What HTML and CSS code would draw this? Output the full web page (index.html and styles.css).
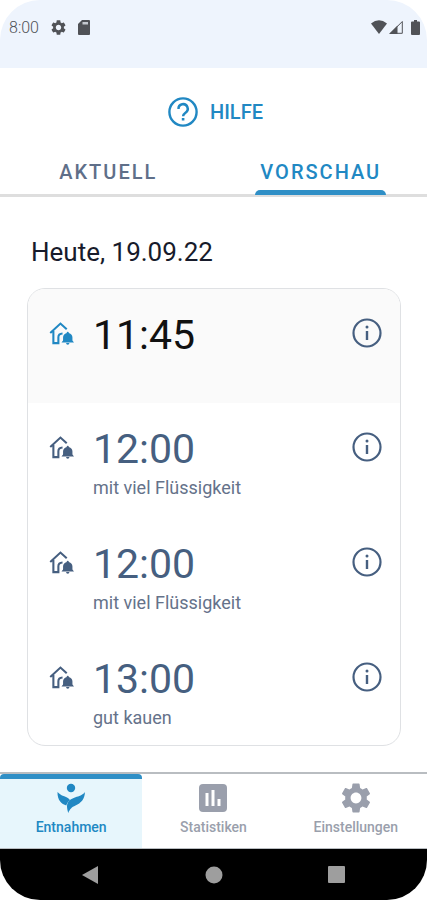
FILE: index.html
```html
<!DOCTYPE html>
<html lang="de">
<head>
<meta charset="utf-8">
<meta name="viewport" content="width=device-width, initial-scale=1">
<title>Entnahmen</title>
<link rel="stylesheet" href="styles.css">
</head>
<body>
<svg class="defs" aria-hidden="true">
  <symbol id="home-bell" viewBox="0 0 24 24">
    <path d="M1.200 11.500 11 2.500l6 5.500M4.200 9.500v11.700H9V15.500q0-3.300 4-3.500" fill="none" stroke="currentColor" stroke-width="2"/>
    <path d="M18 10.200a1 1 0 0 1 1 1v.3c2.300.6 3.500 2.400 3.500 4.300v3l1.500 1.900H12l1.500-1.900v-3c0-1.900 1.200-3.700 3.500-4.300v-.3a1 1 0 0 1 1-1ZM16.400 21.200h3.200a1.600 1.600 0 0 1-3.200 0Z" fill="currentColor"/>
  </symbol>
  <symbol id="info" viewBox="0 0 30 30">
    <circle cx="15" cy="15" r="13.500" fill="none" stroke="currentColor" stroke-width="2.200"/>
    <circle cx="15" cy="9" r="1.500" fill="currentColor"/>
    <path d="M15 13v9" stroke="currentColor" stroke-width="2.400"/>
  </symbol>
  <symbol id="gear" viewBox="2 2 20 20">
    <path fill="currentColor" d="M19.140 12.940c.04-.3.060-.61.060-.94 0-.32-.02-.64-.07-.94l2.030-1.580c.18-.14.23-.41.120-.61l-1.920-3.320c-.12-.22-.37-.29-.59-.22l-2.390.96c-.5-.38-1.030-.7-1.620-.94l-.36-2.540c-.04-.24-.24-.41-.48-.41h-3.840c-.24 0-.43.170-.47.410l-.36 2.540c-.59.240-1.130.570-1.620.940l-2.390-.96c-.22-.08-.47 0-.59.220L2.740 8.870c-.12.210-.08.470.120.610l2.030 1.580c-.05.300-.09.630-.09.940s.02.640.070.940l-2.030 1.580c-.18.140-.23.410-.12.610l1.920 3.320c.12.220.37.290.59.220l2.390-.96c.5.380 1.030.7 1.620.940l.36 2.540c.05.240.24.410.48.410h3.840c.24 0 .44-.17.470-.41l.36-2.540c.59-.24 1.130-.56 1.620-.94l2.390.96c.22.080.47 0 .59-.22l1.920-3.320c.12-.22.070-.47-.12-.61l-2.010-1.580ZM12 15.600c-1.980 0-3.600-1.620-3.600-3.600s1.620-3.600 3.600-3.600 3.600 1.620 3.600 3.600-1.620 3.600-3.600 3.600Z"/>
  </symbol>
</svg>
<div class="screen">
  <header class="status">
    <span class="clock">8:00</span>
    <svg class="status-icon" width="15" height="15"><use href="#gear"/></svg>
    <svg class="status-icon" width="12" height="15" viewBox="0 0 12 15"><path fill="currentColor" d="M4 0h7q1 0 1 1v13q0 1-1 1H1q-1 0-1-1V4Z"/><path d="M4.500 3.200h5.500" stroke="#c5c9d0" stroke-width="2.400"/></svg>
    <span class="status-right">
      <svg width="16" height="14" viewBox="0 0 16 14"><path fill="currentColor" d="M8 14 0 3.500Q8-3 16 3.500Z"/></svg>
      <svg width="14" height="14" viewBox="0 0 14 14"><path d="M1.500 13.300 13.300 1.500v11.800Z" fill="none" stroke="currentColor"/><path fill="currentColor" d="M0 14 8.500 5.500V14Z"/></svg>
      <svg class="battery" width="9" height="15" viewBox="0 0 9 15"><path fill="currentColor" d="M3 0h3v1.500h2q1 0 1 1V14q0 1-1 1H1q-1 0-1-1V2.500q0-1 1-1h2Z"/></svg>
    </span>
  </header>

  <button class="help" type="button">
    <svg width="30" height="30" viewBox="0 0 30 30" fill="none" stroke="currentColor"><circle cx="15" cy="15" r="13.600" stroke-width="2.400"/><path d="M10.500 12a4.600 4.600 0 1 1 7 3.700c-1.700 1.200-2.400 1.800-2.400 3.600" stroke-width="2.500"/><path d="M15.100 21v2.500" stroke-width="2.600"/></svg>
    HILFE
  </button>

  <nav class="tabs">
    <a class="tab" href="#aktuell"><span>AKTUELL</span></a>
    <a class="tab active" href="#vorschau" aria-current="page"><span>VORSCHAU</span></a>
  </nav>

  <main>
    <h1>Heute, 19.09.22</h1>
    <ul class="card">
      <li class="dose next">
        <svg class="place" width="25" height="25"><use href="#home-bell"/></svg>
        <div><time>11:45</time></div>
        <button class="info" type="button" aria-label="Info"><svg width="30" height="30"><use href="#info"/></svg></button>
      </li>
      <li class="dose">
        <svg class="place" width="25" height="25"><use href="#home-bell"/></svg>
        <div><time>12:00</time><p>mit viel Flüssigkeit</p></div>
        <button class="info" type="button" aria-label="Info"><svg width="30" height="30"><use href="#info"/></svg></button>
      </li>
      <li class="dose">
        <svg class="place" width="25" height="25"><use href="#home-bell"/></svg>
        <div><time>12:00</time><p>mit viel Flüssigkeit</p></div>
        <button class="info" type="button" aria-label="Info"><svg width="30" height="30"><use href="#info"/></svg></button>
      </li>
      <li class="dose">
        <svg class="place" width="25" height="25"><use href="#home-bell"/></svg>
        <div><time>13:00</time><p>gut kauen</p></div>
        <button class="info" type="button" aria-label="Info"><svg width="30" height="30"><use href="#info"/></svg></button>
      </li>
    </ul>
  </main>

  <nav class="bottom">
    <a class="item active" href="#entnahmen" aria-current="page">
      <svg width="30" height="30" viewBox="0 0 30 30" fill="currentColor"><circle cx="15" cy="5" r="4.200"/><path d="M1.500 9c3 3.500 6 4 9 5.200 2 .8 3 2 3.500 3-2 1.300-3.300 3.300-3.600 5.300C5.500 21 1.200 17 1.500 9Z"/><path d="M29 9c-2.500 3.500-6 4-9.500 5.300-5 1.700-8.500 4.200-8.500 9.200 0 2.200.7 4.200 1.200 6.500 1.800-4 3.300-5.800 7.300-7.500C25 20 28.500 16.500 29 9Z"/></svg>
      Entnahmen
    </a>
    <a class="item" href="#statistiken">
      <svg width="30" height="30" viewBox="0 0 30 30"><rect x="1" y="1" width="28" height="28" rx="4" fill="currentColor"/><path d="M9 10v13M15 7v16M21 16v7" stroke="#fff" stroke-width="3"/></svg>
      Statistiken
    </a>
    <a class="item" href="#einstellungen">
      <svg width="30" height="30"><use href="#gear"/></svg>
      Einstellungen
    </a>
  </nav>

  <footer class="system">
    <button type="button" aria-label="Zurück"><svg width="18" height="18" viewBox="0 0 18 18"><path d="M17 0v18L1 9Z" fill="currentColor"/></svg></button>
    <button type="button" aria-label="Startbildschirm"><svg width="18" height="18" viewBox="0 0 18 18"><circle cx="9" cy="9" r="8.500" fill="currentColor"/></svg></button>
    <button type="button" aria-label="Übersicht"><svg width="18" height="18" viewBox="0 0 18 18"><rect x="0" y="0" width="17" height="17" rx="1" fill="currentColor"/></svg></button>
  </footer>
</div>
</body>
</html>
```
FILE: styles.css
```css
* { box-sizing: border-box; }

body {
  margin: 0;
  background: #fff;
  font-family: Roboto, "Liberation Sans", sans-serif;
}

svg { display: block; }
.defs { position: absolute; width: 0; height: 0; }

button {
  padding: 0;
  border: 0;
  background: none;
  color: inherit;
  font: inherit;
}

a { color: inherit; text-decoration: none; }

.screen {
  display: flex;
  flex-direction: column;
  min-height: 100vh;
  border-radius: 40px;
  overflow: hidden;
}

.status {
  display: flex;
  align-items: center;
  gap: 12px;
  height: 68px;
  padding: 0 7px 14px 9px;
  background: #eef4fd;
  color: #505257;
}

.clock {
  font-size: 16px;
  font-weight: 300;
}

.status-right {
  display: flex;
  align-items: center;
  gap: 2px;
  margin-left: auto;
}

.battery { margin-left: 6px; }

.help {
  display: flex;
  align-items: center;
  justify-content: center;
  gap: 12px;
  height: 36px;
  margin-top: 26px;
  padding-left: 4px;
  color: #2188c3;
  font-size: 20px;
  font-weight: 500;
}

.tabs {
  display: flex;
  height: 67px;
  padding-left: 2px;
  border-bottom: 3px solid #dedede;
  color: #5f6f89;
  font-size: 20px;
  font-weight: 500;
  letter-spacing: 2px;
  text-align: center;
}

.tab {
  display: flex;
  flex: 1;
  justify-content: center;
}

.tab span {
  height: 65px;
  padding: 30px 5px 0;
  line-height: 24px;
}

.tab.active { color: #2188c3; }

.tab.active span {
  position: relative;
}

.tab.active span::after {
  position: absolute;
  right: 0;
  bottom: 0;
  left: 0;
  height: 5px;
  border-radius: 5px 5px 0 0;
  background: #2f8fc6;
  content: "";
}

main { padding: 38px 26px 26px 27px; }

h1 {
  margin: 0 0 18px 4px;
  color: #171b2b;
  font-size: 26px;
  font-weight: 400;
  line-height: 35px;
}

.card {
  margin: 0;
  padding: 0;
  border: 1px solid #dfe1e4;
  border-radius: 18px;
  overflow: hidden;
  list-style: none;
}

.dose {
  display: grid;
  grid-template-columns: 44px 1fr 30px;
  align-items: start;
  min-height: 115px;
  padding: 20px 18px 0 21px;
  color: #465f80;
}

.dose.next { min-height: 114px; background: #fafafa; }
.dose:last-child { min-height: 112px; }
.next .place { color: #2188c3; }
.next time { color: #111; }
.place { margin-top: 12px; }
.info { margin-top: 9px; }

time {
  display: block;
  font-size: 41px;
  line-height: 52px;
}

.dose p {
  margin: 0;
  color: #65728a;
  font-size: 18px;
  line-height: 26px;
}

.bottom {
  display: grid;
  grid-template-columns: repeat(3, 1fr);
  height: 77px;
  margin-top: auto;
  border-top: 2px solid #b9bdc1;
  border-bottom: 1px solid #b9bdc1;
}

.item {
  display: flex;
  flex-direction: column;
  align-items: center;
  gap: 3px;
  padding-top: 9px;
  color: #9a9fac;
  font-size: 14px;
  font-weight: 500;
  line-height: 22px;
}

.item.active {
  padding-top: 4px;
  border-top: 5px solid #2f8fc6;
  border-radius: 4px 4px 0 0;
  background: #e7f6fc;
  color: #2188c3;
}

.system {
  display: flex;
  justify-content: space-between;
  align-items: center;
  height: 51px;
  padding: 0 81px;
  background: #000;
  color: #9e9e9e;
}
```
